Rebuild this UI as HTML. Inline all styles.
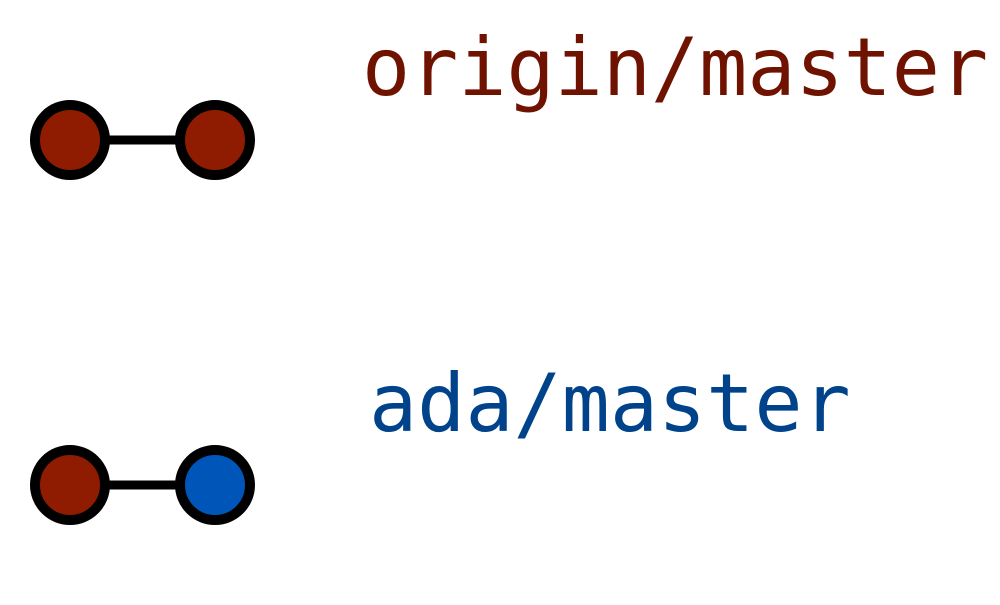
<!DOCTYPE html>
<html><head><style>html,body{margin:0;padding:0;background:#fff;}</style></head>
<body>
<svg width="1000" height="600" xmlns="http://www.w3.org/2000/svg">
<line x1="70" y1="140" x2="215" y2="140" stroke="#000" stroke-width="9"/>
<circle cx="70" cy="140" r="35" fill="#8f1c00" stroke="#000" stroke-width="10"/>
<circle cx="215" cy="140" r="35" fill="#8f1c00" stroke="#000" stroke-width="10"/>
<line x1="70" y1="485" x2="215" y2="485" stroke="#000" stroke-width="9"/>
<circle cx="70" cy="485" r="35" fill="#8f1c00" stroke="#000" stroke-width="10"/>
<circle cx="215" cy="485" r="35" fill="#0055b9" stroke="#000" stroke-width="10"/>
<text x="362" y="95" font-family="DejaVu Sans Mono, Liberation Mono, monospace" font-size="80" fill="#6f1300">origin/master</text>
<text x="369" y="431" font-family="DejaVu Sans Mono, Liberation Mono, monospace" font-size="80" fill="#00438b">ada/master</text>
</svg>
</body></html>
